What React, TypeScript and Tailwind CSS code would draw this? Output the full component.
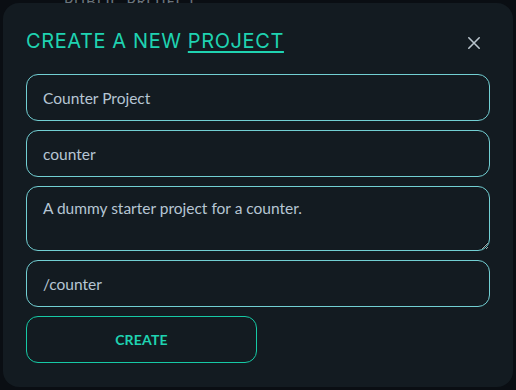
import React from "react";

export default function App() {
  const inputCls =
    "w-full h-[47px] rounded-[12px] border border-[#72cfd3] bg-transparent px-[16px] text-[15.5px] text-[#b6c6d4] outline-none";
  return (
    <div className="relative w-[516px] h-[390px] bg-[#0a0e13] overflow-hidden" style={{ fontFamily: "Lato, 'Noto Sans', sans-serif" }}>
      <div className="absolute left-[64px] top-[-10px] text-[15px] text-[#6a747c] tracking-[1px]">PUBLIC PROJECT</div>
      <div className="absolute inset-[3px] rounded-[16px] bg-[#131b21] px-[23px] pt-[24px]">
        <div className="flex items-center justify-between h-[28px]">
          <h1 className="text-[20px] text-[#1fd3b1] leading-none tracking-[0.6px]" style={{ fontFamily: "Inter, 'Noto Sans', sans-serif", fontWeight: 400 }}>
            CREATE A NEW <span className="underline underline-offset-[3px] decoration-[1.5px]">PROJECT</span>
          </h1>
          <button className="mr-[9px] mt-[4px] text-[#b9c5cd]">
            <svg width="14" height="14" viewBox="0 0 14 14" fill="none" stroke="currentColor" strokeWidth="1.6" strokeLinecap="round">
              <path d="M1.8 1.8 L12.2 12.2 M12.2 1.8 L1.8 12.2" />
            </svg>
          </button>
        </div>
        <div className="mt-[19px] flex flex-col gap-[9px]">
          <input className={inputCls} defaultValue="Counter Project" />
          <input className={inputCls} defaultValue="counter" />
          <textarea
            className="w-full h-[65px] rounded-[12px] border border-[#72cfd3] bg-transparent px-[16px] pt-[10px] text-[15.5px] text-[#b6c6d4] outline-none resize-y"
            defaultValue="A dummy starter project for a counter."
          />
          <input className={inputCls} defaultValue="/counter" />
          <button className="w-[231px] h-[47px] rounded-[12px] border border-[#16c9a5] text-[#1fd3b1] text-[14px] font-bold tracking-[0.2px]">
            CREATE
          </button>
        </div>
      </div>
    </div>
  );
}
